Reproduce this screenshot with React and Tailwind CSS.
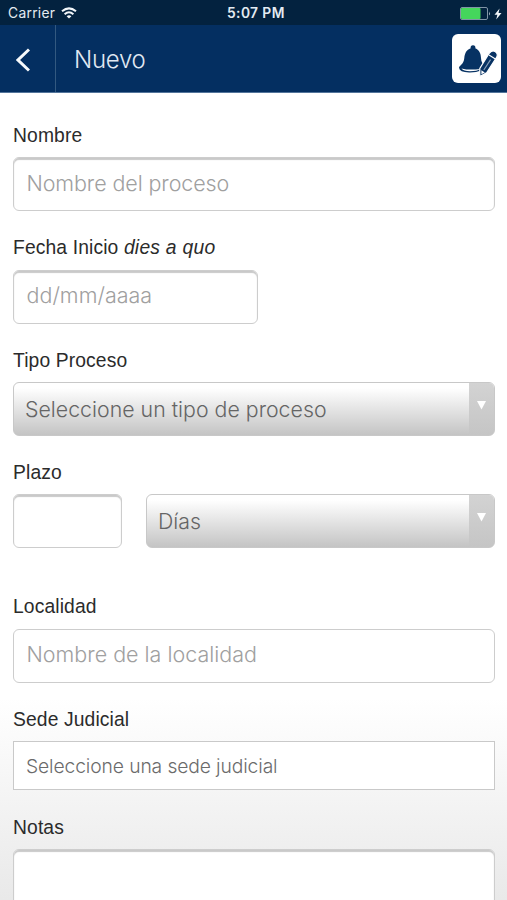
import React from 'react';

const labelClass = "block h-[24px] pt-[1px] text-[19.3px] leading-[24px] tracking-[0.12px] text-[#2b2b2b] whitespace-nowrap";
const inputClass = "block h-[54px] rounded-[6px] border-[1.5px] border-[#cdcdcd] bg-white px-[12.5px] font-['Inter'] font-light text-[21.5px] text-[#a0a0a0] placeholder:text-[#a0a0a0] outline-none shadow-[inset_0_2px_1px_#c9c9c9]";

function StatusBar() {
  return (
    <div className="relative flex h-[25px] items-center justify-between bg-[#03223f] pl-[8px] pr-[5px] font-['Inter'] text-[#e3ebf2]">
      <div className="flex items-center gap-[6px]">
        <span className="text-[13.8px] leading-[25px] pt-[2px] tracking-[0.3px]">Carrier</span>
        <svg width="16" height="12" viewBox="0 0 16 12" fill="none" stroke="#f2f6fa" strokeWidth="2">
          <path d="M1 4.3 Q8 -1.6 15 4.3" />
          <path d="M3.6 7.2 Q8 3.4 12.4 7.2" />
          <path d="M8 11.6 L5.6 9.2 Q8 7.4 10.4 9.2 Z" fill="#f2f6fa" stroke="none" />
        </svg>
      </div>
      <span className="absolute left-[227px] top-[1px] text-[13.8px] leading-[25px] tracking-[0.4px] font-semibold">5:07 PM</span>
      <div className="flex items-center gap-[3px] pt-[2px]">
        <svg width="31" height="13" viewBox="0 0 31 13">
          <rect x="0.5" y="0.5" width="27" height="12" rx="1.5" fill="none" stroke="#8094a6" />
          <rect x="1" y="1" width="19.5" height="11" rx="1" fill="#45d65c" />
          <path d="M29 4.5 Q30.8 6.5 29 8.5 Z" fill="#a9b7c4" />
        </svg>
        <svg width="8" height="12" viewBox="0 0 8 12">
          <path d="M5.6 0.5 L0.5 6.7 H3.4 L2.2 11.5 L7.5 5 H4.5 Z" fill="#f2f6fa" />
        </svg>
      </div>
    </div>
  );
}

function Header() {
  return (
    <header className="flex h-[68px] items-center border-b border-[#53759b] bg-[#042f61] pr-[6px]">
      <button className="flex h-full w-[56px] items-center border-r border-[#335980] pl-[16px] pt-[2px]">
        <svg width="14" height="24" viewBox="0 0 14 24" fill="none" stroke="#f7fafc" strokeWidth="3">
          <path d="M13 1.5 L2 12 L13 22.5" />
        </svg>
      </button>
      <h1 className="flex-1 pl-[18px] pt-[3px] font-['Inter'] font-light text-[24px] tracking-[-0.3px] text-[#e1e9f3]">Nuevo</h1>
      <button className="flex h-[49px] w-[49px] items-center justify-center rounded-[6px] bg-white">
        <svg width="49" height="49" viewBox="0 0 49 49">
          <path d="M21 11.3 C23 11.3 23.8 13 23.3 14.2 C27.5 16 28.8 19.5 29 24 C29.2 28 30.5 30 33.5 32.5 L29 36.5 Q24 38.8 17 38.6 Q7.5 38.2 7 33.8 C7 31.2 11.8 31 12.3 24 C12.8 19 14.5 15.8 18.7 14.2 C18.2 13 19.1 11.3 21 11.3 Z" fill="#073263" />
          <path d="M9.5 34.4 Q17 36.4 28.5 35 Q25 37.2 18 37.2 Q11.5 37 9.5 34.4 Z" fill="#fff" />
          <path d="M36.9 19.8 Q39.5 15.7 43 17.4 Q46.6 19.4 44.6 23.4 L34.6 38.8 L27.8 42.6 L27.8 34.4 Z" fill="#073263" stroke="#fff" strokeWidth="1.2" />
          <path d="M37 21 L43.4 25" stroke="#fff" strokeWidth="1.1" />
          <path d="M38.6 25.6 L31.8 36" stroke="#8ba1b9" strokeWidth="1.1" />
          <path d="M29.4 36.3 L32.8 38.4 L29.4 40.2 Z" fill="#fff" />
        </svg>
      </button>
    </header>
  );
}

function Select({ text }) {
  return (
    <div className="flex h-[54px] flex-1 overflow-hidden rounded-[6px] border-[1.5px] border-[#c8c8c8] bg-linear-to-b from-white from-10% to-[#c4c4c4]">
      <div className="flex flex-1 items-center pl-[11px] pt-[1px] font-['Inter'] font-light text-[21.3px] tracking-[0.02px] text-[#656565]">{text}</div>
      <div className="flex w-[25px] justify-center bg-linear-to-b from-[#d3d3d3] to-[#c5c5c5] pt-[18px]">
        <svg width="9" height="9" viewBox="0 0 9 9">
          <path d="M0 0 H9 L4.5 8.5 Z" fill="#fff" />
        </svg>
      </div>
    </div>
  );
}

function App() {
  return (
    <div className="h-[900px] w-[507px] overflow-hidden bg-white font-['Liberation_Sans',sans-serif]">
      <StatusBar />
      <Header />
      <form className="h-[807px] bg-linear-to-b from-white from-75% to-[#e9e9e9] pl-[13px] pr-[12px] pt-[30px]">
        <div className="mb-[24px] flex flex-col gap-[10px]">
          <label className={labelClass}>Nombre</label>
          <input className={`${inputClass} pb-[3px] tracking-[-0.1px]`} placeholder="Nombre del proceso" />
        </div>
        <div className="mb-[24px] flex flex-col gap-[11px]">
          <label className={labelClass}>Fecha Inicio <em className="tracking-[0.25px]">dies a quo</em></label>
          <input className={`${inputClass} w-[245px] pb-[5px]`} placeholder="dd/mm/aaaa" />
        </div>
        <div className="mb-[24px] flex flex-col gap-[10px]">
          <label className={labelClass}>Tipo Proceso</label>
          <div className="flex">
            <Select text="Seleccione un tipo de proceso" />
          </div>
        </div>
        <div className="mb-[46px] flex flex-col gap-[10px]">
          <label className={labelClass}>Plazo</label>
          <div className="flex gap-[24px]">
            <input className={`${inputClass} w-[109px]`} />
            <Select text="Días" />
          </div>
        </div>
        <div className="mb-[24px] flex flex-col gap-[11px]">
          <label className={labelClass}>Localidad</label>
          <input className="block h-[54px] rounded-[6px] border-[1.5px] border-[#cdcdcd] bg-white px-[12.5px] pb-[4px] font-['Inter'] font-light text-[21.5px] outline-none placeholder:text-[#a0a0a0]" placeholder="Nombre de la localidad" />
        </div>
        <div className="mb-[25px] flex flex-col gap-[10px]">
          <label className={labelClass}>Sede Judicial</label>
          <input className="h-[49px] border-[1.5px] border-[#c9c9c9] bg-white px-[12px] pt-[1px] font-['Inter'] font-light text-[19.3px] tracking-[-0.12px] outline-none placeholder:text-[#6b6b6b]" placeholder="Seleccione una sede judicial" />
        </div>
        <div className="flex flex-col gap-[10px]">
          <label className={labelClass}>Notas</label>
          <textarea className="h-[80px] resize-none rounded-[6px] border-[1.5px] border-[#cdcdcd] bg-white outline-none shadow-[inset_0_2px_1px_#c9c9c9]" />
        </div>
      </form>
    </div>
  );
}

export default App;
